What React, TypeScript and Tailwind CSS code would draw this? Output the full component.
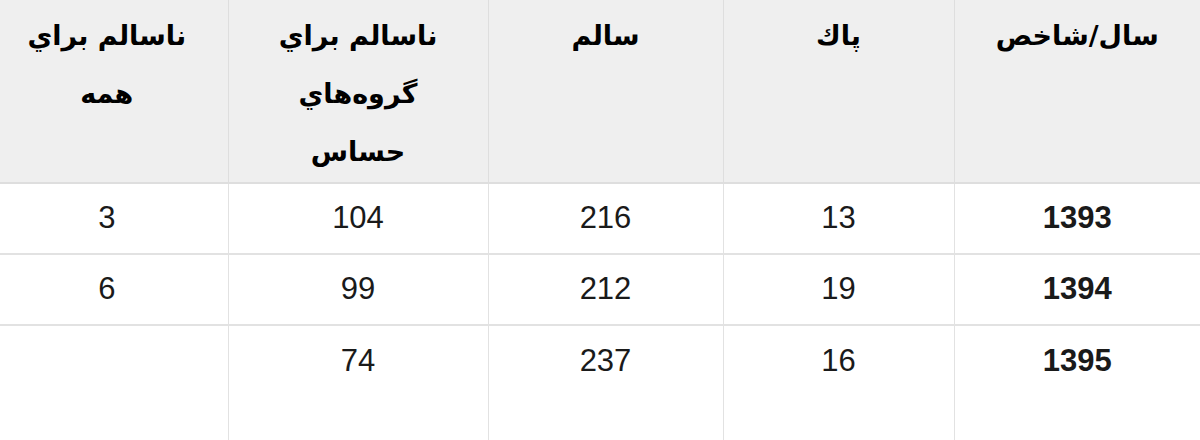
const HEADERS = ['سال/شاخص', 'پاك', 'سالم', 'ناسالم براي گروه‌هاي حساس', 'ناسالم براي همه']

const ROWS = [
  ['1393', '13', '216', '104', '3'],
  ['1394', '19', '212', '99', '6'],
  ['1395', '16', '237', '74', ''],
]

const WIDTHS = ['w-[246px]', 'w-[231px]', 'w-[235px]', 'w-[260px]', 'w-[228px]']

export default function App() {
  return (
    <div className="w-[1200px] h-[440px] overflow-hidden bg-white" dir="rtl">
      <table className="w-[1200px] table-fixed border-collapse">
        <colgroup>
          {WIDTHS.map((w, i) => (
            <col key={i} className={w} />
          ))}
        </colgroup>
        <thead>
          <tr className="h-[183px] bg-[#efefef]">
            {HEADERS.map((h, i) => (
              <th
                key={i}
                className={`align-top border-l border-b-2 border-[#dedede] last:border-l-0 pt-[7px] text-[27px] leading-[58px] font-bold text-black font-['DejaVu_Sans',sans-serif] ${i === 4 ? 'pl-6 pr-[38px]' : 'px-6'}`}
              >
                {h}
              </th>
            ))}
          </tr>
        </thead>
        <tbody>
          {ROWS.map((row, r) => (
            <tr key={r} className="h-[71px]">
              {row.map((v, i) => (
                <td
                  key={i}
                  className={`text-center align-middle border-l border-[#e2e2e2] last:border-l-0 text-[31px] text-[#1a1a1a] font-['Liberation_Sans',Arial,sans-serif] ${r < 2 ? 'border-b-2' : ''} ${i === 0 ? 'font-bold' : ''} ${i === 4 ? 'pr-[14px]' : ''}`}
                >
                  {v}
                </td>
              ))}
            </tr>
          ))}
          <tr className="h-[120px]">
            {WIDTHS.map((_, i) => (
              <td key={i} className="border-l border-[#e2e2e2] last:border-l-0" />
            ))}
          </tr>
        </tbody>
      </table>
    </div>
  )
}
